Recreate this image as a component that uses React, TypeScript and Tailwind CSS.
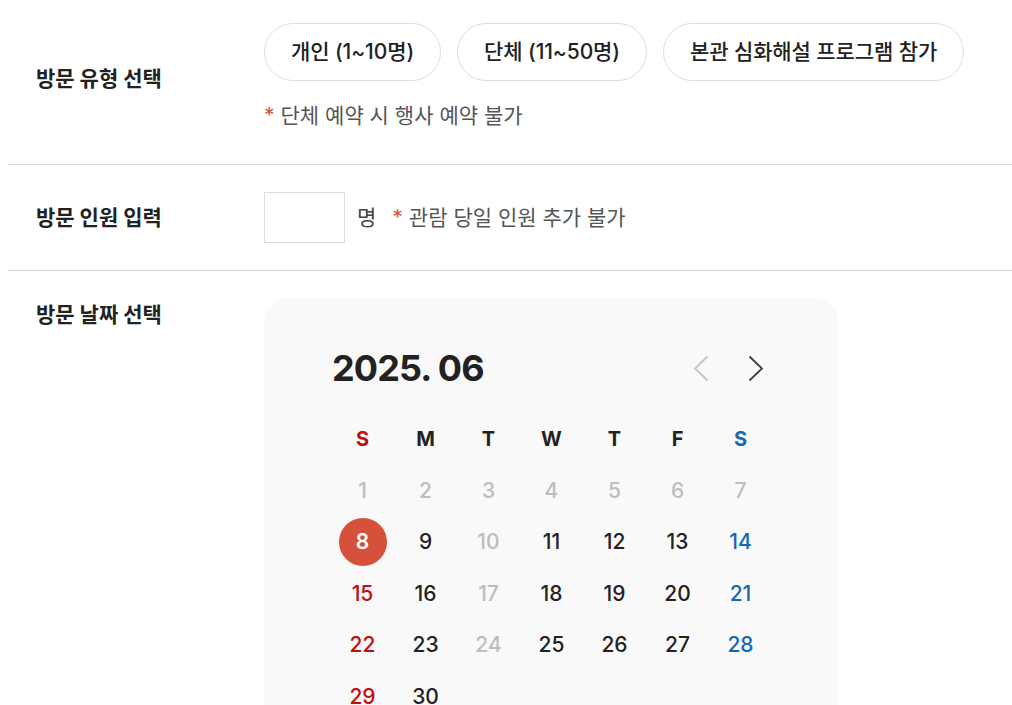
import React from "react";

const FONT = 'Inter, "Noto Sans CJK KR", "Noto Sans", sans-serif';

type Day = { d: number; tone: "muted" | "sun" | "sat" | "normal" | "selected" };

const weeks: (Day | null)[][] = [
  [1, 2, 3, 4, 5, 6, 7].map((d) => ({ d, tone: "muted" as const })),
  [
    { d: 8, tone: "selected" },
    { d: 9, tone: "normal" },
    { d: 10, tone: "muted" },
    { d: 11, tone: "normal" },
    { d: 12, tone: "normal" },
    { d: 13, tone: "normal" },
    { d: 14, tone: "sat" },
  ],
  [
    { d: 15, tone: "sun" },
    { d: 16, tone: "normal" },
    { d: 17, tone: "muted" },
    { d: 18, tone: "normal" },
    { d: 19, tone: "normal" },
    { d: 20, tone: "normal" },
    { d: 21, tone: "sat" },
  ],
  [
    { d: 22, tone: "sun" },
    { d: 23, tone: "normal" },
    { d: 24, tone: "muted" },
    { d: 25, tone: "normal" },
    { d: 26, tone: "normal" },
    { d: 27, tone: "normal" },
    { d: 28, tone: "sat" },
  ],
  [{ d: 29, tone: "sun" }, { d: 30, tone: "normal" }, null, null, null, null, null],
];

function DayCell({ day }: { day: Day | null }) {
  if (!day) return <div className="h-[51.5px]" />;
  if (day.tone === "selected") {
    return (
      <div className="h-[51.5px] flex items-center justify-center">
        <span className="w-[48px] h-[48px] rounded-full bg-[#d5513b] text-white flex items-center justify-center text-[21px] font-semibold">
          {day.d}
        </span>
      </div>
    );
  }
  const color =
    day.tone === "muted"
      ? "text-[#bdbdbd]"
      : day.tone === "sun"
      ? "text-[#c00d0d]"
      : day.tone === "sat"
      ? "text-[#1469b3]"
      : "text-[#222222]";
  return (
    <div className={`h-[51.5px] flex items-center justify-center text-[21px] font-medium ${color}`}>
      {day.d}
    </div>
  );
}

export default function App() {
  const heads = [
    { t: "S", c: "text-[#c00d0d]" },
    { t: "M", c: "text-[#222222]" },
    { t: "T", c: "text-[#222222]" },
    { t: "W", c: "text-[#222222]" },
    { t: "T", c: "text-[#222222]" },
    { t: "F", c: "text-[#222222]" },
    { t: "S", c: "text-[#1469b3]" },
  ];
  return (
    <div className="w-[1012px] h-[705px] overflow-hidden bg-white pl-[8px]" style={{ fontFamily: FONT }}>
      {/* Row 1 */}
      <div className="flex items-center border-b border-[#d4d4d4] pt-[23px] pb-[34px]">
        <div className="w-[256px] pl-[28px] pt-[4px] text-[21px] font-bold text-[#222]">방문 유형 선택</div>
        <div className="flex flex-col">
          <div className="flex gap-[16px]">
            {["개인 (1~10명)", "단체 (11~50명)", "본관 심화해설 프로그램 참가"].map((t) => (
              <button
                key={t}
                className="h-[58px] px-[26px] rounded-full border border-[#dedede] bg-white text-[21px] font-medium text-[#222] tracking-[-0.1px]"
              >
                {t}
              </button>
            ))}
          </div>
          <div className="mt-[21px] h-[28px] flex items-center text-[21px] text-[#555]">
            <span className="text-[#d5513b] mr-[6px]">*</span>
            단체 예약 시 행사 예약 불가
          </div>
        </div>
      </div>

      {/* Row 2 */}
      <div className="flex items-center border-b border-[#d4d4d4] py-[27px]">
        <div className="w-[256px] pl-[28px] text-[21px] font-bold text-[#222]">방문 인원 입력</div>
        <input className="w-[81px] h-[51px] border border-[#dddddd] bg-white outline-none" />
        <span className="ml-[12px] text-[21px] text-[#444]">명</span>
        <span className="ml-[16px] text-[21px] text-[#555]">
          <span className="text-[#d5513b] mr-[6px]">*</span>관람 당일 인원 추가 불가
        </span>
      </div>

      {/* Row 3 */}
      <div className="flex items-start pt-[27px]">
        <div className="w-[256px] pl-[28px] pt-[1px] text-[21px] font-bold text-[#222]">방문 날짜 선택</div>
        <div className="w-[574px] rounded-[24px] bg-[#f9f9f9] pl-[67px] pr-[66px] pt-[48px] pb-[40px]">
          <div className="flex items-center justify-between h-[44px]">
            <div className="pl-[1px] text-[36px] font-bold text-[#222] tracking-[-0.9px]">2025. 06</div>
            <div className="flex items-center gap-[39px] pr-[8px]">
              <svg width="16" height="27" viewBox="0 0 16 27" fill="none">
                <path d="M14.5 1.5L2 13.5L14.5 25.5" stroke="#c4c4c4" strokeWidth="1.8" />
              </svg>
              <svg width="16" height="27" viewBox="0 0 16 27" fill="none">
                <path d="M1.5 1.5L14 13.5L1.5 25.5" stroke="#3a3f4a" strokeWidth="1.8" />
              </svg>
            </div>
          </div>
          <div className="grid grid-cols-7 mt-[23px]">
            {heads.map((h, i) => (
              <div key={i} className={`h-[51.5px] flex items-center justify-center text-[20px] font-bold ${h.c}`}>
                {h.t}
              </div>
            ))}
            {weeks.flat().map((d, i) => (
              <DayCell key={i} day={d} />
            ))}
          </div>
        </div>
      </div>
    </div>
  );
}
